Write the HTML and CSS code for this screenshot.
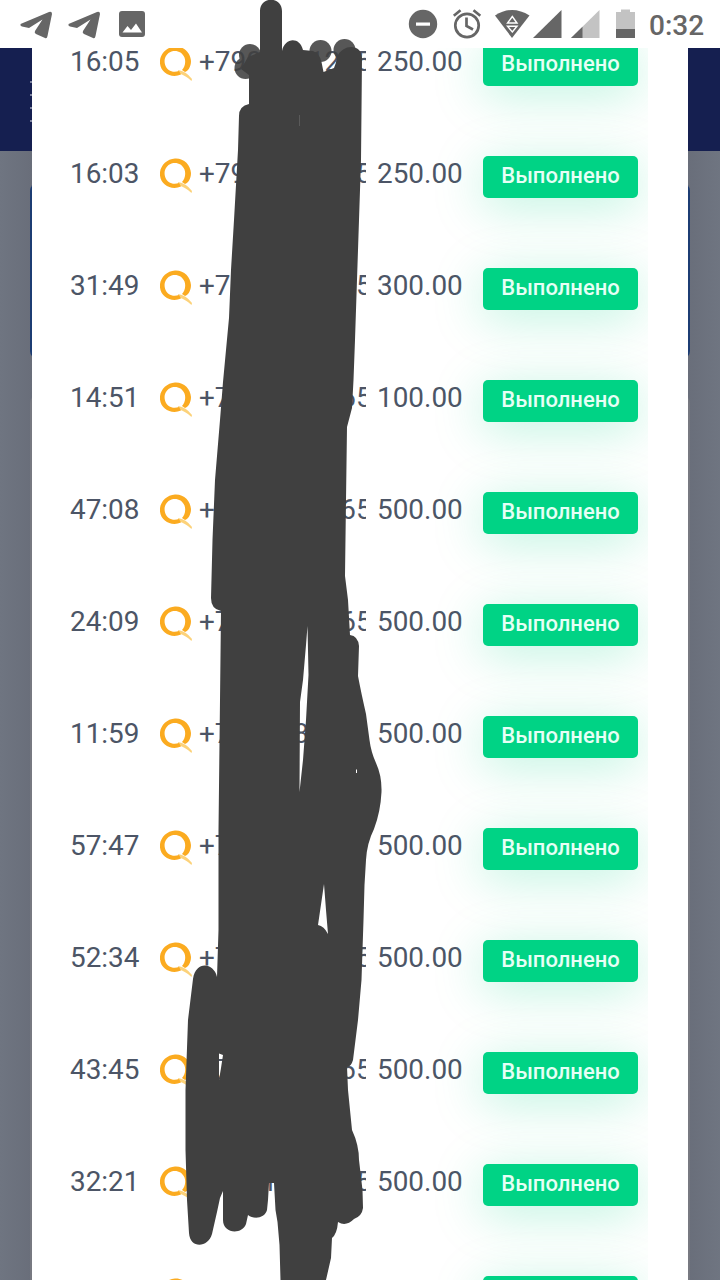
FILE: index.html
```html
<!DOCTYPE html>
<html lang="ru">
<head>
    <meta charset="UTF-8">
    <meta name="viewport" content="width=device-width, initial-scale=1.0">
    <title>Выплаты</title>
    <link rel="stylesheet" href="styles.css">
</head>
<body>
    <div class="statusbar">
        <svg class="status-icons" width="720" height="48" viewBox="0 0 720 48" fill="#666">
            <!-- telegram x2, picture -->
            <path id="plane" d="M20.500 24Q20 26 22 26.500L29 28L42.500 19.500L35 31Q34 33 36 34L45 38Q47 39 47.500 36L52 14Q52 11 49 12Z"/>
            <use href="#plane" x="48"/>
            <rect x="119" y="11" width="26" height="26" rx="3"/>
            <path d="M122.500 32.500L127.500 26L131 30L136 23.500L142 32.500Z" fill="#fff"/>
            <!-- do not disturb -->
            <circle cx="423" cy="24" r="14.200"/>
            <rect x="416" y="22.500" width="14" height="3.200" fill="#fff"/>
            <!-- alarm -->
            <g fill="none" stroke="#666" stroke-width="2.700">
                <circle cx="467" cy="25.500" r="11.700"/>
                <path d="M466.500 17.500V26L473 29.500M453.800 15.700L460.500 10.300M480.300 15.700L473.500 10.300"/>
            </g>
            <!-- wifi -->
            <path d="M495 15.500Q512 4.500 529.500 15.500L512 38Z"/>
            <path d="M512.300 16.500L517 23H507.500ZM512.300 32L517 26.300H507.500Z" stroke="#fff" stroke-width="1.400"/>
            <!-- signal -->
            <path d="M533 38L561.500 10V38Z"/>
            <path d="M571 38L599.500 10V38Z" fill="#c3c3c3"/>
            <path d="M571 38L582.500 26.700V38Z"/>
            <!-- battery -->
            <path d="M616 12H621V9.500H630V12H635V29H616Z" fill="#c3c3c3"/>
            <rect x="616" y="29" width="19" height="9"/>
        </svg>
        <span class="clock">0:32</span>
    </div>

    <div class="page">
        <div class="navbar"><div class="nav-marks"></div></div>
        <div class="card card-blue"></div>
        <div class="card card-plain"></div>

        <div class="modal">
            <div class="list" id="list"></div>
        </div>
    </div>

    <svg class="scribble" width="720" height="1280" viewBox="0 0 720 1280">
        <g fill="#404040" opacity="0.88">
            <circle cx="250" cy="55" r="11"/>
            <circle cx="245.500" cy="68" r="11"/>
            <circle cx="320.500" cy="51" r="11"/>
            <circle cx="344.500" cy="50" r="11"/>
        </g>
        <path fill="#404040" fill-rule="evenodd" d="M260 11C260 -4 282 -4 282 11V51C285 37 300 37 303 50L313 51Q320 54 321.500 62L323.500 72L334 68Q336 64 337 57C343 43 362 44 362 58L361.500 110L361 160L359 220L355 340L353.500 380L352 408L347 427L346 500L345 576L348 600L350 635Q358 636 359 646L358 676Q361 692 366 714L369.500 740Q371 752 376 763Q382 776 381.500 792Q380.500 812 374 829Q367 843 366 860L364.500 885L363.500 920L361.500 980L358 1020L353 1060Q351 1067 347 1067L348 1090L352 1130Q359 1145 359 1160L362.500 1190L363 1208Q362 1216 354 1219Q346 1227 338 1222Q337 1234 332 1238L331 1258L326 1280H280.500L279.500 1245L277.500 1222L275.500 1210L274 1183H269L268 1200L267 1210C265 1218 254 1220 248 1215L246 1224C242 1235 223 1234 223 1220V1191L220 1198L217 1212L212 1234C208 1248 190 1249 189 1233L187 1200L185.500 1150V1090L188 1020L193 979C196 960 214 963 217 977L218.500 930V830L220 700L221 611Q211 609 211 598L212.500 540L215 480L220 420L223 382L229 318L231 270L234 220L238 150L239 116Q239 106 249 104V75L241 69L248 57L260 52Z
            M307.500 626L306 645L303 680L300 702L299.500 792L303 760L306 720L308.500 675Z
            M324 884L318 925Q324 926 328 934L326 910Z
            M219 1053.500L223 1055L221 1068L219 1080Z
            M356 769.500H357V773H356Z"/>
        <path d="M299.500 115V126" stroke="#666" stroke-width="0.700"/>
    </svg>

    <script>
        // covered digits are filled with zeros
        const rows = [
            ["16:05", "+7900001265", "250.00"],
            ["16:03", "+7900000065", "250.00"],
            ["31:49", "+7000000065", "300.00"],
            ["14:51", "+7000000065", "100.00"],
            ["47:08", "+7000000065", "500.00"],
            ["24:09", "+7000000065", "500.00"],
            ["11:59", "+7000080065", "500.00"],
            ["57:47", "+7000000065", "500.00"],
            ["52:34", "+7000000065", "500.00"],
            ["43:45", "+7000000065", "500.00"],
            ["32:21", "+7001000065", "500.00"],
            ["", "", ""]
        ];

        const icon = `<svg class="qiwi" width="32" height="36" viewBox="0 0 32 36">
            <path d="M18 24Q26 25 32 33L31.500 35Q26 29.500 19 27.500Z" fill="#fcd27a"/>
            <path fill="#fbab20" fill-rule="evenodd" d="M15 0.500C24 0 30.500 7 31 15C31 21 28 25 25 26L22 24C25 21 26 16 24.500 11.500C22 6 17 4 11.500 5.500C6 7.500 3.500 13 5 18.500C7 25 13 27 19 25L21 28.500C12 32.500 1 27.500 0 17.500C-1 9 6 1 15 0.500Z"/>
        </svg>`;

        document.getElementById("list").innerHTML = rows.map(([time, phone, sum]) => `
            <div class="row">
                <span class="time">${time}</span>
                ${icon}
                <span class="phone">${phone}</span>
                <span class="sum">${sum}</span>
                <span class="badge">${time ? "Выполнено" : ""}</span>
            </div>`).join("");
    </script>
</body>
</html>
```

FILE: styles.css
```css
* {
    box-sizing: border-box;
}
body {
    margin: 0;
    width: 720px;
    height: 1280px;
    overflow: hidden;
    position: relative;
    font-family: Roboto, sans-serif;
    background: #fff;
}
.statusbar {
    position: relative;
    height: 48px;
    background: #fff;
}
.status-icons {
    display: block;
}
.clock {
    position: absolute;
    left: 649px;
    top: 9px;
    font-size: 28px;
    font-weight: 500;
    line-height: 34px;
    color: #666;
}
.page {
    position: relative;
    height: 1232px;
    background: linear-gradient(90deg, #6f7581, #696e7a 32px, #696e7a 688px, #6f7581);
}
.navbar {
    height: 103px;
    padding: 33px 0 0 30px;
    background: #151f50;
}
.nav-marks {
    width: 2px;
    height: 42px;
    background: repeating-linear-gradient(#7b829f 0 2px, transparent 2px 13px);
}
.card {
    margin: 0 30px;
}
.card-blue {
    height: 176px;
    margin-top: 32px;
    border-radius: 8px;
    background: #1c3c73;
}
.card-plain {
    height: 885px;
    margin-top: 36px;
    border-radius: 8px 8px 0 0;
    background: #777981;
}
.modal {
    position: absolute;
    top: 0;
    left: 32px;
    width: 656px;
    height: 1232px;
    overflow: hidden;
    background: #fff;
}
.list {
    width: 616px;
    margin-top: -39px;
    overflow: hidden;
}
.row {
    display: grid;
    grid-template-columns: 90px 39px 178px 106px 155px;
    align-items: start;
    height: 112px;
    padding: 35px 0 0 38px;
    font-size: 27.9px;
    line-height: 36px;
    color: #4c5566;
}
.row span {
    position: relative;
}
.time, .sum, .phone {
    height: 36px;
    white-space: nowrap;
}
.phone {
    width: 167px;
    overflow: hidden;
}
.qiwi {
    margin-top: 2px;
}
.badge {
    height: 42px;
    border-radius: 5px;
    background: #00d385;
    box-shadow: 0 8px 50px rgba(0, 211, 133, 0.27);
    color: #e6fff5;
    font-size: 22px;
    font-weight: 500;
    line-height: 40px;
    text-align: center;
}
.scribble {
    position: absolute;
    top: 0;
    left: 0;
}
```
